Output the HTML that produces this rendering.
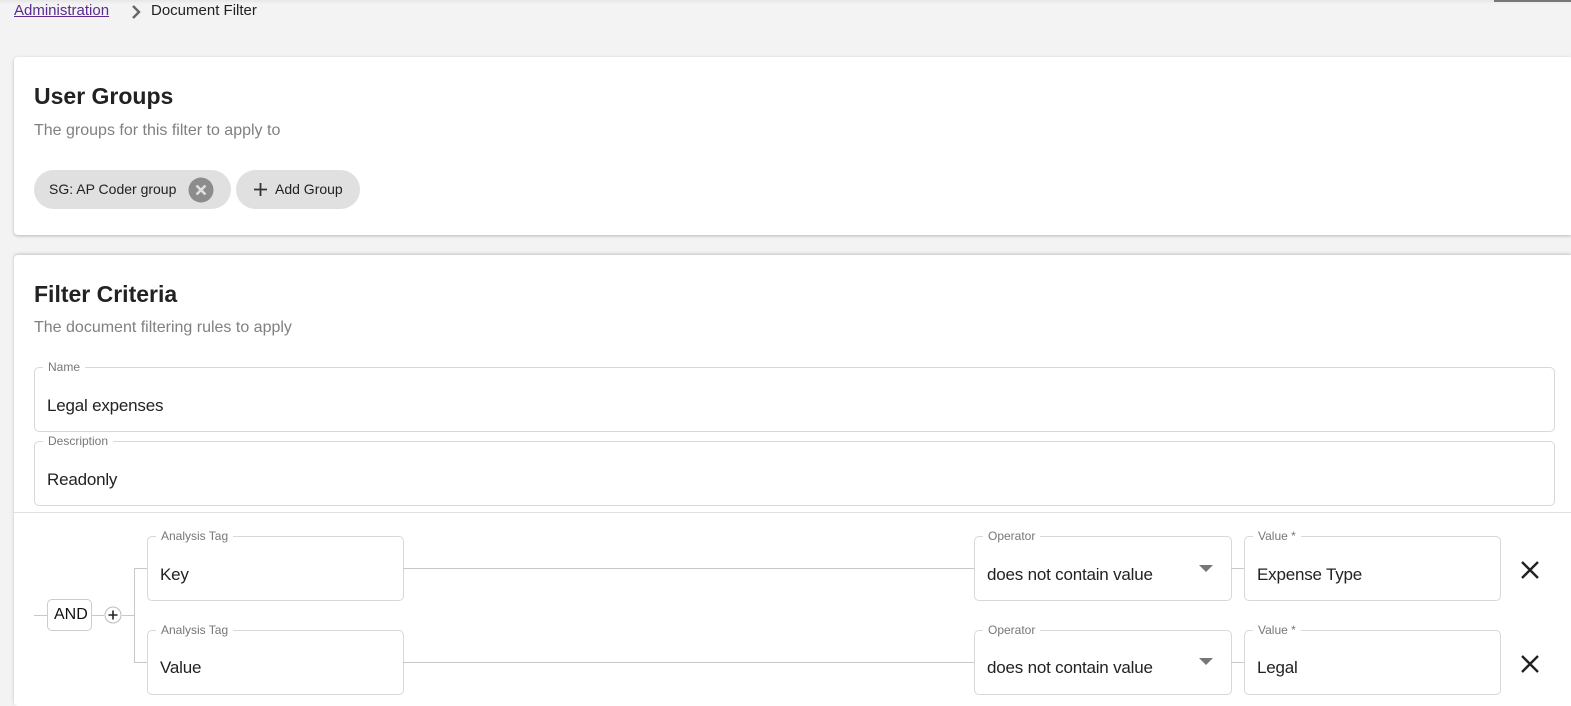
<!DOCTYPE html>
<html style="width:1571px;height:706px;overflow:hidden"><head><style>
*{box-sizing:border-box;margin:0;padding:0}
body{width:1571px;height:706px;overflow:hidden;background:#f3f3f3;font-family:"Liberation Sans",Roboto,sans-serif;position:relative;color:#212121}
.abs{position:absolute}
.card{position:absolute;left:14px;width:1557px;background:#fff;border-radius:4px 0 0 4px;box-shadow:0 1px 3px rgba(0,0,0,.25)}
h2{position:absolute;left:20px;font-size:23px;font-weight:bold;color:#222}
.sub{position:absolute;left:20px;font-size:16px;color:#808080}
.chip{position:absolute;height:39px;border-radius:20px;background:#e0e0e0;font-size:14px;color:#222;line-height:39px}
.fld{position:absolute;border:1px solid #d8d8d8;border-radius:5px;background:#fff}
.lbl{position:absolute;top:-8px;left:8px;background:#fff;padding:0 5px;font-size:12px;color:#777;line-height:14px}
.val{position:absolute;left:12px;font-size:17px;color:#222;letter-spacing:-0.2px}
.ln{position:absolute;background:#c8c8c8}
</style></head><body>
<div class="abs" style="left:0;top:0;width:1571px;height:4px;background:linear-gradient(#e6e6e6,#f3f3f3)"></div>
<div class="abs" style="left:1494px;top:0;width:77px;height:2px;background:#777"></div>
<div class="abs" style="left:14px;top:2px;font-size:15px;color:#5b2c8f;text-decoration:underline">Administration</div>
<svg class="abs" style="left:130px;top:5px" width="12" height="14" viewBox="0 0 12 14"><path d="M3 1l6 6-6 6" fill="none" stroke="#666" stroke-width="2.4"/></svg>
<div class="abs" style="left:151px;top:2px;font-size:15px;color:#222">Document Filter</div>

<div class="card" style="top:57px;height:178px">
<h2 style="top:26px">User Groups</h2>
<div class="sub" style="top:65px">The groups for this filter to apply to</div>
<div class="chip" style="left:20px;top:113px;width:197px;padding-left:15px">SG: AP Coder group
<svg class="abs" style="left:154px;top:7px" width="26" height="26" viewBox="0 0 26 26"><circle cx="13" cy="13" r="12.5" fill="#8c8c8c"/><path d="M8.5 8.5l9 9M17.5 8.5l-9 9" stroke="#e0e0e0" stroke-width="2.5"/></svg></div>
<div class="chip" style="left:222px;top:113px;width:124px;padding-left:39px">Add Group
<svg class="abs" style="left:18px;top:13px" width="13" height="13" viewBox="0 0 13 13"><path d="M6.5 0v13M0 6.5h13" stroke="#333" stroke-width="1.8"/></svg></div>
</div>

<div class="card" style="top:255px;height:451px;box-shadow:0 -1px 3px rgba(0,0,0,.2)">
<h2 style="top:26px">Filter Criteria</h2>
<div class="sub" style="top:64px">The document filtering rules to apply</div>
<div class="fld" style="left:20px;top:112px;width:1521px;height:65px"><div class="lbl">Name</div><div class="val" style="top:28px">Legal expenses</div></div>
<div class="fld" style="left:20px;top:186px;width:1521px;height:65px"><div class="lbl">Description</div><div class="val" style="top:28px">Readonly</div></div>
<div class="ln" style="left:0;top:257px;width:1557px;height:1px;background:#e0e0e0"></div>
</div>

<div class="ln" style="left:34px;top:615px;width:14px;height:1px"></div>
<div class="fld" style="left:47px;top:599px;width:45px;height:32px;border-color:#ccc"><div class="abs" style="left:6px;top:6px;font-size:16px;color:#111">AND</div></div>
<div class="ln" style="left:92px;top:615px;width:12px;height:1px"></div>
<svg class="abs" style="left:104px;top:606px" width="18" height="18" viewBox="0 0 18 18"><circle cx="9" cy="9" r="8" fill="#fff" stroke="#bbb"/><path d="M9 4.5v9M4.5 9h9" stroke="#222" stroke-width="1.6"/></svg>
<div class="ln" style="left:122px;top:615px;width:12px;height:1px"></div>
<div class="ln" style="left:134px;top:568px;width:1px;height:95px"></div>
<div class="ln" style="left:134px;top:568px;width:13px;height:1px"></div>
<div class="ln" style="left:134px;top:662px;width:13px;height:1px"></div>

<div class="fld" style="left:147px;top:536px;width:257px;height:65px"><div class="lbl">Analysis Tag</div><div class="val" style="top:28px">Key</div></div>
<div class="ln" style="left:403px;top:568px;width:571px;height:1px"></div>
<div class="fld" style="left:974px;top:536px;width:258px;height:65px"><div class="lbl">Operator</div><div class="val" style="top:28px">does not contain value</div>
<svg class="abs" style="left:224px;top:28px" width="14" height="8"><path d="M0 0h14L7 7z" fill="#777"/></svg></div>
<div class="ln" style="left:1231px;top:568px;width:14px;height:1px"></div>
<div class="fld" style="left:1244px;top:536px;width:257px;height:65px"><div class="lbl">Value *</div><div class="val" style="top:28px">Expense Type</div></div>
<svg class="abs" style="left:1521px;top:561px" width="18" height="18" viewBox="0 0 18 18"><path d="M1 1l16 16M17 1L1 17" stroke="#222" stroke-width="2.4"/></svg>

<div class="fld" style="left:147px;top:630px;width:257px;height:65px"><div class="lbl">Analysis Tag</div><div class="val" style="top:27px">Value</div></div>
<div class="ln" style="left:403px;top:662px;width:571px;height:1px"></div>
<div class="fld" style="left:974px;top:630px;width:258px;height:65px"><div class="lbl">Operator</div><div class="val" style="top:27px">does not contain value</div>
<svg class="abs" style="left:224px;top:27px" width="14" height="8"><path d="M0 0h14L7 7z" fill="#777"/></svg></div>
<div class="ln" style="left:1231px;top:662px;width:14px;height:1px"></div>
<div class="fld" style="left:1244px;top:630px;width:257px;height:65px"><div class="lbl">Value *</div><div class="val" style="top:27px">Legal</div></div>
<svg class="abs" style="left:1521px;top:655px" width="18" height="18" viewBox="0 0 18 18"><path d="M1 1l16 16M17 1L1 17" stroke="#222" stroke-width="2.4"/></svg>
</body></html>
